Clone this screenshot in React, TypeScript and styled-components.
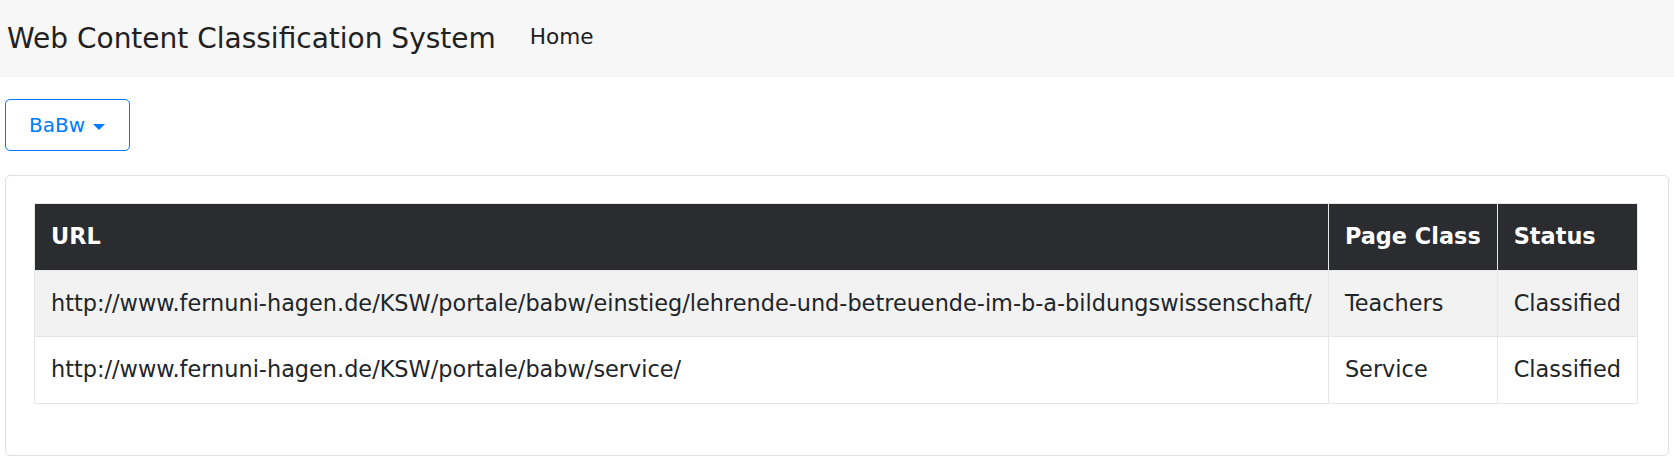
import React from 'react'
import styled, { createGlobalStyle } from 'styled-components'

const GlobalStyle = createGlobalStyle`
  body {
    margin: 0;
    font-family: "DejaVu Sans", "Liberation Sans", sans-serif;
    font-size: 22.4px;
    line-height: 1.5;
    color: #212529;
    background: #fff;
  }
`

const Navbar = styled.nav`
  display: flex;
  align-items: center;
  height: 77px;
  padding: 0 7px;
  background-color: #f7f7f7;
`

const Brand = styled.a`
  font-size: 28px;
  line-height: 1.5;
  color: #212121;
  text-decoration: none;
  margin-right: 34px;
  margin-top: 1px;
`

const NavLink = styled.a`
  font-size: 21.6px;
  color: #1e1e1e;
  text-decoration: none;
  margin-top: -3px;
`

const Main = styled.main`
  padding: 22px 5px 0;
`

const DropdownButton = styled.button`
  display: inline-flex;
  align-items: center;
  box-sizing: border-box;
  height: 52px;
  padding: 0 24px 0 23px;
  font-family: inherit;
  font-size: 20px;
  color: #007bff;
  background: #fff;
  border: 1px solid #007bff;
  border-radius: 5px;
  cursor: pointer;
`

const Caret = styled.span`
  display: inline-block;
  margin-left: 8px;
  margin-top: 3px;
  border-top: 6.5px solid currentColor;
  border-left: 6.5px solid transparent;
  border-right: 6.5px solid transparent;
`

const Card = styled.section`
  margin-top: 24px;
  border: 1px solid #dfdfdf;
  border-radius: 5px;
  padding: 27px 30px 51px 28px;
`

const Table = styled.table`
  width: 100%;
  border-collapse: collapse;
  border: 1px solid #e6e6e6;
`

const HeadCell = styled.th`
  padding: 16px;
  height: 66px;
  box-sizing: border-box;
  text-align: left;
  vertical-align: middle;
  font-weight: bold;
  color: #fff;
  background-color: #2b2c2f;
  border: 1px solid #e8e8e8;
  white-space: nowrap;
`

const Row = styled.tr<{ $striped?: boolean }>`
  background-color: ${(p) => (p.$striped ? '#f2f2f2' : '#fff')};
`

const Cell = styled.td`
  padding: 16px;
  height: 66px;
  box-sizing: border-box;
  vertical-align: middle;
  border: 1px solid #e6e6e6;
  white-space: nowrap;
`

const rows = [
  {
    url: 'http://www.fernuni-hagen.de/KSW/portale/babw/einstieg/lehrende-und-betreuende-im-b-a-bildungswissenschaft/',
    pageClass: 'Teachers',
    status: 'Classified',
  },
  {
    url: 'http://www.fernuni-hagen.de/KSW/portale/babw/service/',
    pageClass: 'Service',
    status: 'Classified',
  },
]

export default function App() {
  return (
    <>
      <GlobalStyle />
      <Navbar>
        <Brand href="#">Web Content Classification System</Brand>
        <NavLink href="#">Home</NavLink>
      </Navbar>
      <Main>
        <DropdownButton type="button">
          BaBw
          <Caret />
        </DropdownButton>
        <Card>
          <Table>
            <thead>
              <tr>
                <HeadCell>URL</HeadCell>
                <HeadCell>Page Class</HeadCell>
                <HeadCell>Status</HeadCell>
              </tr>
            </thead>
            <tbody>
              {rows.map((row, i) => (
                <Row key={row.url} $striped={i % 2 === 0}>
                  <Cell>{row.url}</Cell>
                  <Cell>{row.pageClass}</Cell>
                  <Cell>{row.status}</Cell>
                </Row>
              ))}
            </tbody>
          </Table>
        </Card>
      </Main>
    </>
  )
}
